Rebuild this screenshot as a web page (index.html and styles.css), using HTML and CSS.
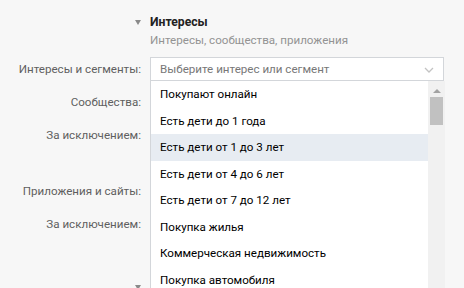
FILE: index.html
```html
<!DOCTYPE html>
<html lang="ru">
<head>
<meta charset="utf-8">
<link rel="stylesheet" href="styles.css">
</head>
<body>
<div class="section">
  <div class="head">
    <span class="caret"></span>
    <div class="head-text">
      <div class="title">Интересы</div>
      <div class="sub">Интересы, сообщества, приложения</div>
    </div>
  </div>

  <div class="row">
    <div class="label">Интересы и сегменты:</div>
    <div class="field">
      <div class="select">
        <span class="placeholder">Выберите интерес или сегмент</span>
        <svg class="chev" width="10" height="6" viewBox="0 0 10 6"><path d="M1 1 L5 5 L9 1" fill="none" stroke="#c3c3c3" stroke-width="1.3"/></svg>
      </div>
      <div class="dropdown">
        <ul class="options">
          <li>Покупают онлайн</li>
          <li>Есть дети до 1 года</li>
          <li class="active">Есть дети от 1 до 3 лет</li>
          <li>Есть дети от 4 до 6 лет</li>
          <li>Есть дети от 7 до 12 лет</li>
          <li>Покупка жилья</li>
          <li>Коммерческая недвижимость</li>
          <li>Покупка автомобиля</li>
        </ul>
        <div class="scrollbar">
          <span class="arrow"></span>
          <span class="thumb"></span>
        </div>
      </div>
    </div>
  </div>

  <div class="row">
    <div class="label">Сообщества:</div>
    <div class="field"></div>
  </div>
  <div class="row">
    <div class="label">За исключением:</div>
    <div class="field"></div>
  </div>

  <div class="row group">
    <div class="label">Приложения и сайты:</div>
    <div class="field"></div>
  </div>
  <div class="row">
    <div class="label">За исключением:</div>
    <div class="field"></div>
  </div>

  <div class="head next">
    <span class="caret"></span>
    <div class="head-text"></div>
  </div>
</div>
</body>
</html>
```

FILE: styles.css
```css
html, body {
  margin: 0;
  padding: 0;
  background: #f7f7f7;
  overflow: hidden;
  height: 288px;
}
body {
  font-family: Roboto, "Liberation Sans", Arial, sans-serif;
  font-size: 11.6px;
  color: #000;
}
.section {
  padding-top: 13px;
}
.head {
  display: grid;
  grid-template-columns: 141px 294px;
  column-gap: 9px;
}
.caret {
  justify-self: end;
  margin-top: 7px;
  margin-right: 0;
  width: 0;
  height: 0;
  border-left: 3.5px solid transparent;
  border-right: 3.5px solid transparent;
  border-top: 5px solid #8a8a8a;
}
.title {
  font-weight: 700;
  font-size: 12.2px;
  line-height: 18px;
  color: #222;
}
.sub {
  line-height: 18px;
  color: #939393;
}
.row {
  display: grid;
  grid-template-columns: 141px 295px;
  column-gap: 9px;
  align-items: center;
  height: 24px;
  margin-top: 9px;
}
.head + .row {
  margin-top: 8px;
}
.row.group {
  margin-top: 32px;
}
.label {
  text-align: right;
  color: #5f5f5f;
  line-height: 16px;
  white-space: nowrap;
}
.field {
  position: relative;
  height: 24px;
}
.select {
  box-sizing: border-box;
  height: 24px;
  width: 294px;
  border: 1px solid #d3d6da;
  background: #fff;
  display: flex;
  align-items: center;
  justify-content: space-between;
  padding: 0 9px 0 9px;
}
.placeholder {
  color: #777;
  line-height: 16px;
}
.chev {
  display: block;
  margin-top: 1px;
}
.dropdown {
  position: absolute;
  top: 24px;
  left: 0;
  width: 295px;
  height: 230px;
  display: flex;
  background: #fff;
  border-left: 1px solid #d3d6da;
  box-sizing: border-box;
  z-index: 2;
}
.options {
  list-style: none;
  margin: 0;
  padding: 0;
  flex: 1;
}
.options li {
  height: 26.5px;
  box-sizing: border-box;
  padding: 4px 9px 0;
  line-height: 18px;
  white-space: nowrap;
  overflow: hidden;
}
.options li.active {
  background: #e7ecf2;
}
.scrollbar {
  width: 17px;
  background: #f1f1f1;
  position: relative;
  display: flex;
  flex-direction: column;
  align-items: center;
}
.arrow {
  margin-top: 8px;
  width: 0;
  height: 0;
  border-left: 4px solid transparent;
  border-right: 4px solid transparent;
  border-bottom: 4px solid #a3a3a3;
}
.thumb {
  margin-top: 4px;
  width: 13px;
  height: 28px;
  background: #c1c1c1;
}
.head.next {
  margin-top: 42px;
}
```
